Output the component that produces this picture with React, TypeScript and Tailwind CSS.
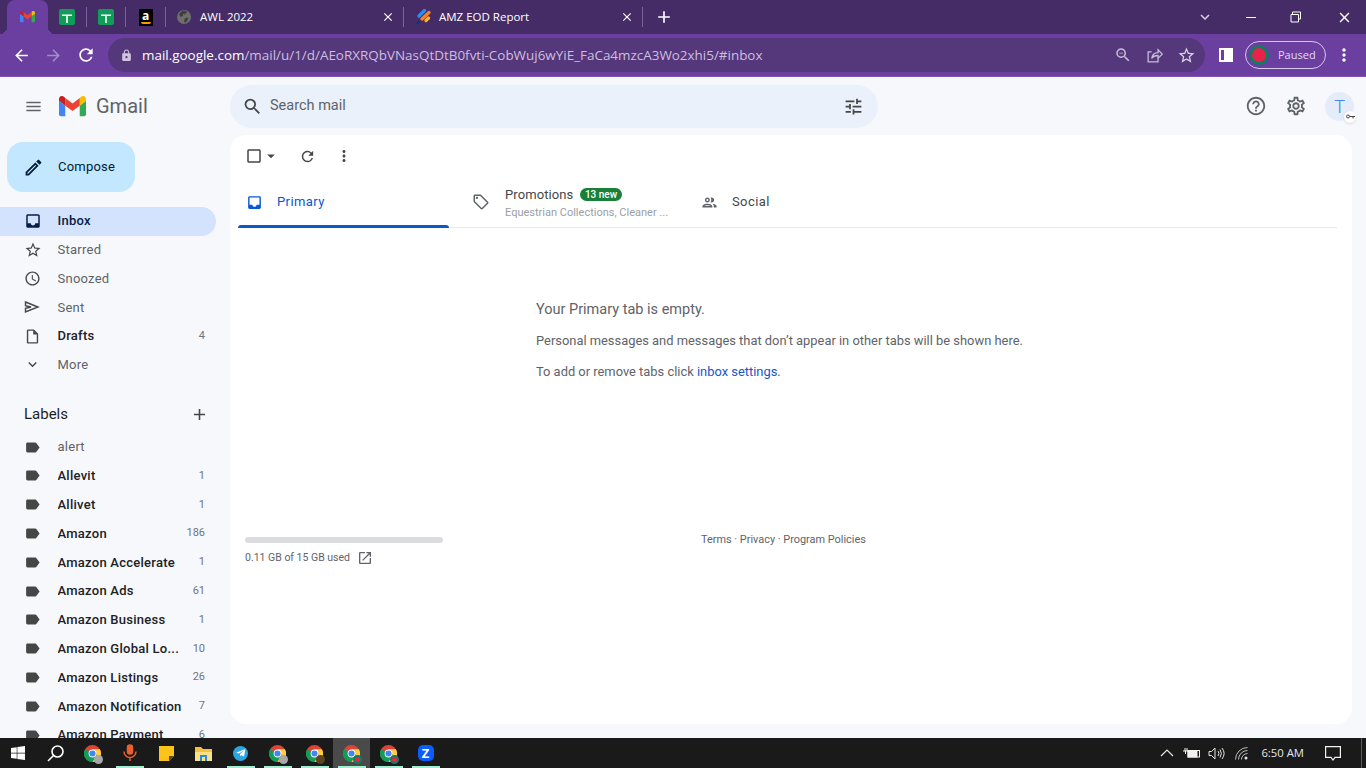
import React from 'react';
import {
  MdAdd, MdArrowBack, MdArrowDropDown, MdArrowForward, MdCheckBoxOutlineBlank, MdClose, MdExpandMore,
  MdHelpOutline, MdInbox, MdLabel, MdLock, MdMenu, MdMoreVert, MdOpenInNew, MdOutlineCreate,
  MdOutlineInsertDriveFile, MdOutlineLocalOffer, MdOutlinePeople, MdOutlineSettings, MdOutlineStarBorder,
  MdOutlineWatchLater, MdRefresh, MdSearch, MdStarBorder, MdTune, MdZoomOut, MdKeyboardArrowDown,
} from 'react-icons/md';
import { FaTelegramPlane, FaWindows } from 'react-icons/fa';

function SheetsIcon() {
  return (
    <div className="flex h-4 w-4 items-center justify-center rounded-[2px] bg-[#0f9d58]">
      <svg width="10" height="11" viewBox="0 0 10 11"><path d="M0 2.500h10v1.500H5.800V11H4.200V4H0z" fill="#fff" /></svg>
    </div>
  );
}

function GmailLogo({ size }: { size: number }) {
  return (
    <svg width={size} height={size * 0.75} viewBox="0 0 28 21">
      <path d="M2 21h4.500V10L0 5v14a2 2 0 0 0 2 2z" fill="#4285f4" />
      <path d="M21.500 21H26a2 2 0 0 0 2-2V5l-6.500 5z" fill="#34a853" />
      <path d="M21.500 2v8L28 5V3c0-2.500-2.800-3.900-4.800-2.400z" fill="#fbbc04" />
      <path d="M6.500 10V2L14 7.800 21.500 2v8L14 15.600z" fill="#ea4335" />
      <path d="M0 3v2l6.500 5V2L4.800.6C2.800-.9 0 .5 0 3z" fill="#c5221f" />
    </svg>
  );
}

function Chrome({ badge }: { badge?: 'gray' | 'red' | 'dark' }) {
  return (
    <div className="relative h-[17px] w-[17px]">
      <svg width="17" height="17" viewBox="0 0 24 24">
        <circle cx="12" cy="12" r="12" fill="#db4437" />
        <path d="M12 12 L1.600 6 A12 12 0 0 0 12 24 L18 13z" fill="#0f9d58" />
        <path d="M12 6h10.400A12 12 0 0 1 12 24l6-10.400z" fill="#ffcd40" />
        <circle cx="12" cy="12" r="5.500" fill="#fff" />
        <circle cx="12" cy="12" r="4.300" fill="#4285f4" />
      </svg>
      {badge === 'gray' && <span className="absolute -bottom-[2px] -right-[2px] h-[9px] w-[9px] rounded-full bg-[#a8a8a8]" />}
      {badge === 'red' && <span className="absolute -bottom-[2px] -right-[2px] h-[9px] w-[9px] rounded-full border-2 border-[#0f7c63] bg-[#e8234a]" />}
      {badge === 'dark' && <span className="absolute -bottom-[2px] -right-[2px] h-[9px] w-[9px] rounded-full bg-[#5a4322]" />}
    </div>
  );
}

function TaskItem({ children, running, active }: { children: React.ReactNode; running?: boolean; active?: boolean }) {
  return (
    <div className={`relative flex h-[30px] w-[37px] items-center justify-center ${active ? 'bg-[#4a4a4a]' : ''}`}>
      {children}
      {running && <span className="absolute bottom-0 left-1/2 h-[2px] w-[28px] -translate-x-1/2 bg-[#a3edd0]" />}
    </div>
  );
}

function NavRow({ icon, label, count, bold, active }: { icon: React.ReactNode; label: string; count?: string; bold?: boolean; active?: boolean }) {
  return (
    <div className={`flex h-[28.800px] w-[216px] shrink-0 items-center rounded-r-full pb-[1px] pl-6 pr-[11px] text-[13px] ${active ? 'bg-[#d3e3fd] font-[460] text-[#041e49]' : bold ? 'font-[460] text-[#202124]' : 'text-[#5f6368]'}`}>
      <div className="flex w-[33.500px] shrink-0 items-center">{icon}</div>
      <span className="min-w-0 flex-1 truncate tracking-[0.25px]">{label}</span>
      {count && <span className="ml-2 text-[11px] font-normal text-[#70757a]">{count}</span>}
    </div>
  );
}

const labels: [string, string?, boolean?][] = [
  ['alert', undefined, false],
  ['Allevit', '1', true],
  ['Allivet', '1', true],
  ['Amazon', '186', true],
  ['Amazon Accelerate', '1', true],
  ['Amazon Ads', '61', true],
  ['Amazon Business', '1', true],
  ['Amazon Global Lo...', '10', true],
  ['Amazon Listings', '26', true],
  ['Amazon Notification', '7', true],
  ['Amazon Payment', '6', true],
];

export default function App() {
  const labelIcon = <MdLabel size={17} className="text-[#444746]" />;
  const navIcon = 'text-[#444746]';
  return (
    <div className="flex h-screen w-[1366px] flex-col overflow-hidden bg-[#f6f8fc] font-['Roboto',sans-serif]">
      {/* chrome tab strip */}
      <div className="flex h-[34px] shrink-0 items-center bg-[#452c67] font-['Open_Sans',sans-serif] text-[11.500px] text-white">
        <div className="relative ml-[7px] flex h-[34px] w-[41px] items-center justify-center rounded-t-lg bg-[#6b3fa0]">
          <GmailLogo size={15} />
          <span className="absolute bottom-0 -left-[7px] h-[7px] w-[7px] bg-[radial-gradient(circle_at_0_0,transparent_7px,#6b3fa0_7px)]" />
          <span className="absolute bottom-0 -right-[7px] h-[7px] w-[7px] bg-[radial-gradient(circle_at_100%_0,transparent_7px,#6b3fa0_7px)]" />
        </div>
        <div className="flex w-[38px] items-center justify-center"><SheetsIcon /></div>
        <div className="h-5 w-px bg-[#7a6396]" />
        <div className="flex w-[38px] items-center justify-center"><SheetsIcon /></div>
        <div className="h-5 w-px bg-[#7a6396]" />
        <div className="flex w-[39px] items-center justify-center">
          <div className="relative flex h-[17px] w-[14px] justify-center bg-black text-[12px] font-bold leading-[13px] text-white">
            a
            <span className="absolute bottom-[2px] left-[2px] h-[2px] w-[10px] rounded-b-full bg-[#f90]" />
          </div>
        </div>
        <div className="h-5 w-px bg-[#7a6396]" />
        <div className="flex w-[237px] items-center pl-[11px] pr-[8px]">
          <svg width="14" height="14" viewBox="0 0 14 14">
            <circle cx="7" cy="7" r="7" fill="#6e6e6e" />
            <path d="M5 1c2-.5 4 0 5 1L8 4.500 6 4v2L3.500 7 2 4zM8 8l3.500-.5L10 11l-2 2-1-2z" fill="#3f3f3f" />
          </svg>
          <span className="ml-[9px] flex-1">AWL 2022</span>
          <MdClose size={14} />
        </div>
        <div className="h-5 w-px bg-[#7a6396]" />
        <div className="flex w-[238px] items-center pl-[11px] pr-[8px]">
          <svg width="16" height="16" viewBox="0 0 16 16">
            <path d="M9.500 1.500 4 7" stroke="#2d8cf0" strokeWidth="3.200" strokeLinecap="round" />
            <path d="M14 3.500 7 10" stroke="#f5822a" strokeWidth="3.200" strokeLinecap="round" />
            <path d="M13.500 9 11 11.500" stroke="#f9b233" strokeWidth="3.200" strokeLinecap="round" />
            <path d="M3 14l1.500-1.500" stroke="#20306b" strokeWidth="3" strokeLinecap="round" />
          </svg>
          <span className="ml-[8px] flex-1">AMZ EOD Report</span>
          <MdClose size={14} />
        </div>
        <div className="h-5 w-px bg-[#7a6396]" />
        <MdAdd size={20} className="ml-[11px]" />
        <div className="ml-auto flex items-center">
          <MdKeyboardArrowDown size={18} className="mr-[32px] text-[#d9d2e3]" />
          <div className="mr-[34px] h-px w-[10px] bg-white" />
          <svg width="12" height="12" viewBox="0 0 12 12" className="mr-[34px]" fill="none" stroke="#fff">
            <path d="M2.500 3V1h8v7H9M1 3.500h7.500V11H1z" />
          </svg>
          <MdClose size={17} className="mr-[13px]" />
        </div>
      </div>

      {/* chrome toolbar */}
      <div className="flex h-[43px] shrink-0 items-center border-b border-[#7d52b3] bg-[#6b3fa0] font-['Open_Sans',sans-serif]">
        <MdArrowBack size={19} className="ml-3 text-white" />
        <MdArrowForward size={19} className="ml-[13px] text-[#a58cc6]" />
        <MdRefresh size={20} className="ml-[13px] text-white" />
        <div className="ml-[12px] flex h-[34px] w-[1097px] items-center rounded-full bg-[#55377c] pl-3 pr-[9px] text-[13.450px]">
          <MdLock size={13} className="text-[#cfc4dc]" />
          <span className="ml-[9px] flex-1 whitespace-nowrap text-[#cdbfdf]">
            <span className="text-white">mail.google.com</span>/mail/u/1/d/AEoRXRQbVNasQtDtB0fvti-CobWuj6wYiE_FaCa4mzcA3Wo2xhi5/#inbox
          </span>
          <MdZoomOut size={18} className="text-[#c9bdd9]" />
          <svg width="17" height="17" viewBox="0 0 24 24" fill="none" stroke="#c9bdd9" strokeWidth="1.800" className="ml-[14px]">
            <path d="M8 7H3v14h14v-5M8 16c1-5 5-8 9-8V4l6 6-6 6v-4c-4 0-7 1-9 4z" />
          </svg>
          <MdStarBorder size={19} className="ml-[14px] text-[#d9d2e3]" />
        </div>
        <div className="ml-[14px] flex h-[14px] w-[14px] items-center justify-end border-[2px] border-white bg-[#6b3fa0]">
          <div className="h-full w-[7px] bg-white" />
        </div>
        <div className="ml-[12px] flex h-[28px] w-[81px] items-center rounded-full border border-[#d7c9ec] pl-[3px] text-[11px] text-[#e3d9f2]">
          <div className="h-[20px] w-[20px] rounded-full border-[3px] border-[#0f7c63] bg-[#e8234a]" />
          <span className="ml-[9px]">Paused</span>
        </div>
        <MdMoreVert size={20} className="ml-[8px] text-white" />
      </div>

      {/* gmail */}
      <div className="flex min-h-0 flex-1">
        <aside className="flex w-[230px] shrink-0 flex-col overflow-hidden">
          <div className="flex h-[59px] shrink-0 items-center pl-[24px]">
            <MdMenu size={19} className="text-[#5f6368]" />
            <div className="ml-[16px]"><GmailLogo size={27} /></div>
            <span className="ml-[10px] -translate-y-px text-[20px] leading-none text-[#5f6368]">Gmail</span>
          </div>
          <div className="ml-[7px] mt-[6px] flex h-[50px] w-[128px] shrink-0 items-center rounded-2xl bg-[#c2e7ff] pl-[16px] text-[13px] text-[#001d35]">
            <MdOutlineCreate size={21} />
            <span className="ml-[14px] tracking-[0.2px]">Compose</span>
          </div>
          <div className="mt-[15px] flex shrink-0 flex-col">
            <NavRow active icon={<MdInbox size={18} className="text-[#041e49]" />} label="Inbox" />
            <NavRow icon={<MdOutlineStarBorder size={18} className={navIcon} />} label="Starred" />
            <NavRow icon={<MdOutlineWatchLater size={17} className={navIcon} />} label="Snoozed" />
            <NavRow icon={
              <svg width="16" height="16" viewBox="0 0 16 16" fill="none" stroke="#444746" strokeWidth="1.400"><path d="M1.500 3 14 8 1.500 13V9.200L7 8 1.500 6.800z" /></svg>
            } label="Sent" />
            <NavRow bold icon={<MdOutlineInsertDriveFile size={17} className={navIcon} />} label="Drafts" count="4" />
            <NavRow icon={<MdExpandMore size={17} className={navIcon} />} label="More" />
          </div>
          <div className="mt-[20px] flex h-[29px] w-[216px] shrink-0 items-center justify-between pl-6 pr-[7px] text-[15px] text-[#1f1f1f]">
            <span>Labels</span>
            <MdAdd size={19} className="text-[#444746]" />
          </div>
          <div className="mt-[4.500px] flex shrink-0 flex-col">
            {labels.map(([name, count, bold]) => (
              <NavRow key={name} icon={labelIcon} label={name} count={count} bold={bold} />
            ))}
          </div>
        </aside>

        <div className="flex min-w-0 flex-1 flex-col pr-[14px]">
          <div className="flex h-[58px] shrink-0 items-center justify-between">
            <div className="flex h-[43px] w-[648px] items-center rounded-full bg-[#eaf1fb] pl-[12px] pr-[14px]">
              <MdSearch size={21} className="text-[#444746]" />
              <span className="ml-[7px] flex-1 text-[14.500px] text-[#5f6368]">Search mail</span>
              <MdTune size={21} className="text-[#444746]" />
            </div>
            <div className="-mr-[2px] flex items-center">
              <MdHelpOutline size={22} className="text-[#5f6368]" />
              <MdOutlineSettings size={22} className="ml-[18px] text-[#5f6368]" />
              <div className="relative ml-[18px] flex h-[29px] w-[29px] items-center justify-center rounded-full bg-[#e3ecf8] text-[18px] font-light text-[#4285f4]">
                T
                <span className="absolute -bottom-[2px] -right-[2px] flex h-[12px] w-[12px] items-center justify-center rounded-full bg-white shadow-sm">
                  <svg width="9" height="5" viewBox="0 0 9 5" fill="none" stroke="#444"><circle cx="2" cy="2.500" r="1.500" /><path d="M3.500 2.500H9M7 2.500V4.500" /></svg>
                </span>
              </div>
            </div>
          </div>

          <main className="mb-[14px] flex min-h-0 flex-1 flex-col rounded-2xl bg-white pl-[8px] pr-[15px]">
            <div className="flex h-[42px] shrink-0 items-center pl-[7px] text-[#444746]">
              <MdCheckBoxOutlineBlank size={18} />
              <MdArrowDropDown size={18} className="-ml-[1px]" />
              <MdRefresh size={17} className="ml-[19px]" />
              <MdMoreVert size={18} className="ml-[19px]" />
            </div>
            <div className="flex h-[51px] shrink-0 border-b border-[#e6e8eb]">
              <div className="relative flex w-[211px] items-center pl-[8px] text-[13px] text-[#0b57d0]">
                <MdInbox size={17} />
                <span className="ml-[14px] tracking-[0.4px]">Primary</span>
                <span className="absolute -bottom-px left-0 h-[3px] w-full rounded-t-sm bg-[#0b57d0]" />
              </div>
              <div className="flex w-[252px] items-center pl-[23px]">
                <MdOutlineLocalOffer size={18} className="text-[#5f6368]" />
                <div className="ml-[15px] flex flex-col">
                  <div className="flex items-center">
                    <span className="text-[13px] tracking-[0.1px] text-[#444746]">Promotions</span>
                    <span className="ml-[7px] rounded-full bg-[#188038] px-[4.500px] text-[10px] font-medium leading-[13px] text-white">13 new</span>
                  </div>
                  <span className="mt-[2px] text-[11px] leading-[13px] text-[#9aa0a6]">Equestrian Collections, Cleaner ...</span>
                </div>
              </div>
              <div className="flex items-center text-[13px] tracking-[0.4px] text-[#444746]">
                <MdOutlinePeople size={17} className="text-[#5f6368]" />
                <span className="ml-[14px]">Social</span>
              </div>
            </div>
            <div className="h-[270px] shrink-0 pl-[298px] pt-[72px] text-[#5f6368]">
              <p className="text-[14.500px] leading-[20px]">Your Primary tab is empty.</p>
              <p className="mt-[11px] text-[12.900px] leading-[19px]">Personal messages and messages that don’t appear in other tabs will be shown here.</p>
              <p className="mt-[12px] text-[12.900px] leading-[19px]">To add or remove tabs click <span className="text-[#1a56c4]">inbox settings</span>.</p>
            </div>
            <div className="flex shrink-0 pl-[7px] pt-[39px]">
              <div>
                <div className="h-[6px] w-[198px] rounded-full bg-[#dadce0]" />
                <div className="mt-[7px] flex items-center text-[10.500px] text-[#5f6368]">
                  <span>0.11 GB of 15 GB used</span>
                  <MdOpenInNew size={16} className="ml-[7px]" />
                </div>
              </div>
              <span className="ml-[258px] -mt-[4px] text-[10.900px] leading-[13px] text-[#5f6368]">Terms · Privacy · Program Policies</span>
            </div>
          </main>
        </div>
      </div>

      {/* windows taskbar */}
      <div className="flex h-[30px] shrink-0 items-center bg-[#1a1a1a] font-['Open_Sans',sans-serif] text-white">
        <div className="flex w-[36px] justify-center"><FaWindows size={16} /></div>
        <div className="flex w-[38px] justify-center">
          <svg width="17" height="17" viewBox="0 0 17 17" fill="none" stroke="#fff" strokeWidth="1.600"><circle cx="10.500" cy="6.500" r="5.500" /><path d="M6.500 10.500 1 16" /></svg>
        </div>
        <TaskItem><Chrome badge="gray" /></TaskItem>
        <TaskItem running>
          <svg width="14" height="18" viewBox="0 0 14 18" fill="none" stroke="#e8602c" strokeWidth="1.500">
            <rect x="4.500" y="1" width="5" height="9" rx="2.500" fill="#e8602c" />
            <path d="M1 7.500a6 6 0 0 0 12 0M7 13.500V17" />
          </svg>
        </TaskItem>
        <TaskItem>
          <svg width="15" height="15" viewBox="0 0 15 15"><path d="M0 0h15v10l-5 5H0z" fill="#fcc419" /><path d="M15 10h-5v5z" fill="#5c4a10" /></svg>
        </TaskItem>
        <TaskItem>
          <svg width="17" height="15" viewBox="0 0 17 15"><path d="M0 1h6l2 2h9v12H0z" fill="#f4c042" /><path d="M0 6h17v9H0z" fill="#fbe08a" /><path d="M5 9h7v6H5z" fill="#2d8bd6" /><path d="M7 11h3v4H7z" fill="#fbe08a" /></svg>
        </TaskItem>
        <TaskItem running>
          <div className="flex h-[15px] w-[15px] items-center justify-center rounded-full bg-[#2ca5e0]"><FaTelegramPlane size={10} /></div>
        </TaskItem>
        <TaskItem running><Chrome badge="gray" /></TaskItem>
        <TaskItem running><Chrome badge="dark" /></TaskItem>
        <TaskItem running active><Chrome badge="red" /></TaskItem>
        <TaskItem running><Chrome badge="red" /></TaskItem>
        <TaskItem running>
          <div className="flex h-[16px] w-[16px] items-center justify-center rounded-[5px] bg-[#0b5cff] text-[13px] font-bold leading-none">Z</div>
        </TaskItem>
        <div className="ml-auto flex items-center pr-[4px]">
          <svg width="14" height="8" viewBox="0 0 14 8" fill="none" stroke="#e6e6e6" strokeWidth="1.200"><path d="M1 7l6-6 6 6" /></svg>
          <svg width="17" height="11" viewBox="0 0 17 11" className="ml-[9px]" fill="none" stroke="#f2f2f2"><rect x="5" y="2.500" width="11.500" height="6.500" /><rect x="5" y="2.500" width="9" height="6.500" fill="#f2f2f2" /><path d="M0 3h5M2 0v3M4 0v3M2.500 3v3" /></svg>
          <svg width="17" height="13" viewBox="0 0 17 13" className="ml-[8px]" fill="none" stroke="#e6e6e6"><path d="M1 4.500h2.500L7 1v11L3.500 8.500H1zM10 4a4 4 0 0 1 0 5M12 2.500a7 7 0 0 1 0 8M14 1a9 9 0 0 1 0 11" /></svg>
          <svg width="15" height="13" viewBox="0 0 15 13" className="ml-[10px]" fill="none" stroke="#bdbdbd"><path d="M.5 12.500a12 12 0 0 1 12-12M3.500 12.500a9 9 0 0 1 9-9M6.500 12.500a6 6 0 0 1 6-6" /><circle cx="11" cy="11" r="1.500" fill="#e6e6e6" stroke="none" /></svg>
          <span className="ml-[11px] text-[11.300px] text-[#e6e6e6]">6:50 AM</span>
          <svg width="16" height="15" viewBox="0 0 16 15" className="ml-[21px]" fill="none" stroke="#f2f2f2" strokeWidth="1.200"><path d="M.6.6h14.800v10.800H10L8 14l-2-2.600H.6z" /></svg>
          <div className="ml-[20px] h-[30px] w-px bg-[#5a5a5a]" />
        </div>
      </div>
    </div>
  );
}
